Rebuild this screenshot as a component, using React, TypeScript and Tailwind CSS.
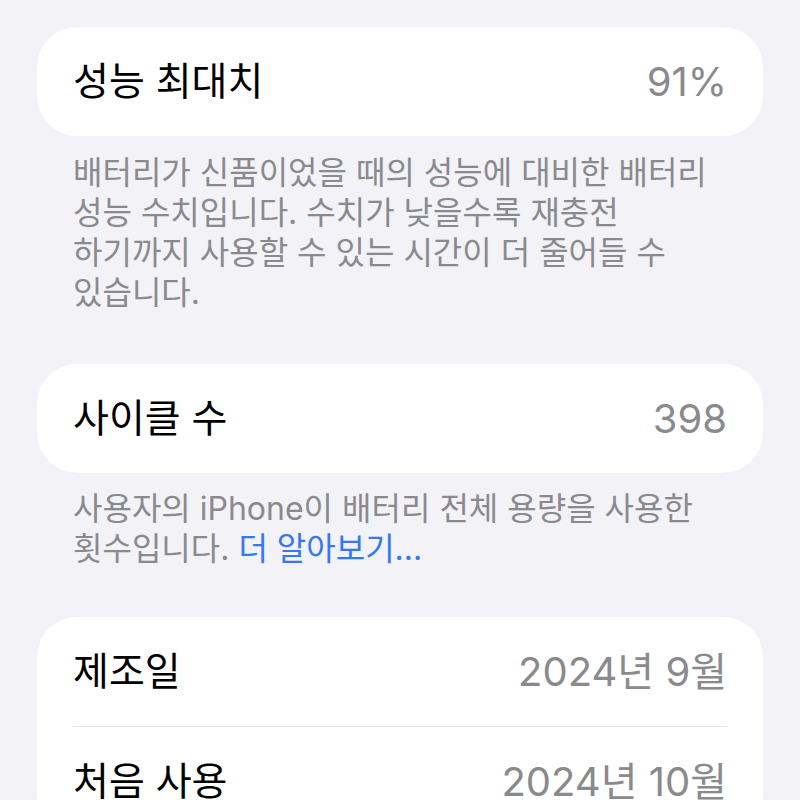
import type { JSX } from "react";

const font = { fontFamily: '"Inter", "Noto Sans CJK KR", sans-serif' };

function Row({ label, value }: { label: string; value: string }) {
  return (
    <div className="flex h-[109px] items-center justify-between">
      <span className="text-[39px] text-black">{label}</span>
      <span className="text-[40px] text-[#8a8a8e]">{value}</span>
    </div>
  );
}

export default function App(): JSX.Element {
  return (
    <div className="h-[800px] overflow-hidden bg-[#f2f2f7] px-[37px] pt-[27px]" style={font}>
      <div className="rounded-[40px] bg-white px-[36px]">
        <Row label="성능 최대치" value="91%" />
      </div>
      <p className="mt-[17px] px-[36px] text-[32px] leading-[40px] text-[#8a8a8e]">
        배터리가 신품이었을 때의 성능에 대비한 배터리
        <br />
        성능 수치입니다. 수치가 낮을수록 재충전
        <br />
        하기까지 사용할 수 있는 시간이 더 줄어들 수
        <br />
        있습니다.
      </p>

      <div className="mt-[51px] rounded-[40px] bg-white px-[36px]">
        <Row label="사이클 수" value="398" />
      </div>
      <p className="mt-[16px] px-[36px] text-[32px] leading-[40px] text-[#8a8a8e]">
        사용자의 iPhone이 배터리 전체 용량을 사용한
        <br />
        횟수입니다. <span className="text-[#3478f6]">더 알아보기...</span>
      </p>

      <div className="mt-[48px] rounded-[40px] bg-white px-[36px]">
        <Row label="제조일" value="2024년 9월" />
        <div className="h-px bg-[#e0e0e5]" />
        <Row label="처음 사용" value="2024년 10월" />
      </div>
    </div>
  );
}
